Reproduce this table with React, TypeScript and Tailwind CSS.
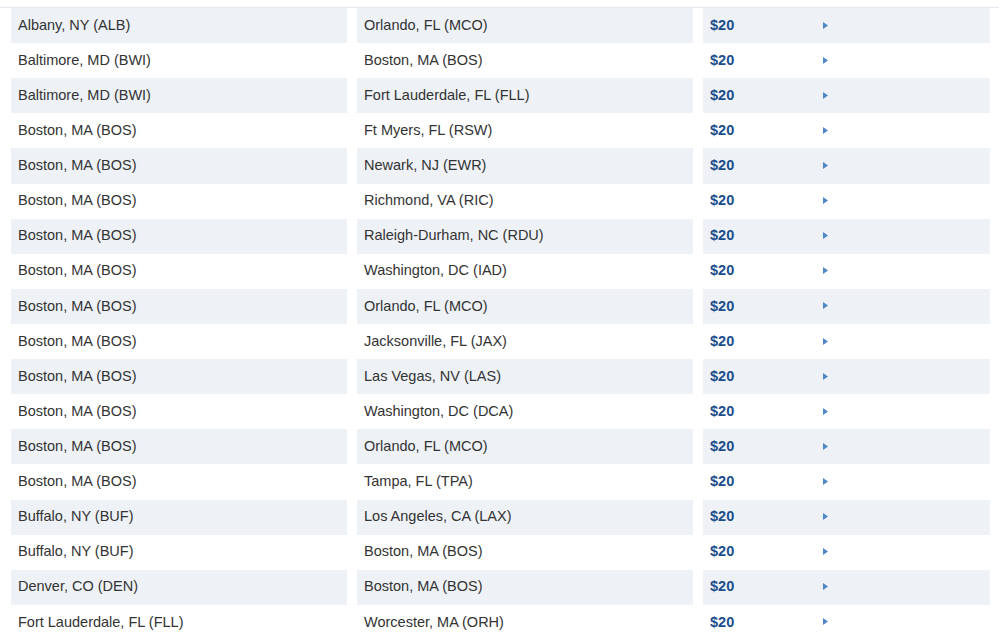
const ROUTES: [string, string][] = [
  ['Albany, NY (ALB)', 'Orlando, FL (MCO)'],
  ['Baltimore, MD (BWI)', 'Boston, MA (BOS)'],
  ['Baltimore, MD (BWI)', 'Fort Lauderdale, FL (FLL)'],
  ['Boston, MA (BOS)', 'Ft Myers, FL (RSW)'],
  ['Boston, MA (BOS)', 'Newark, NJ (EWR)'],
  ['Boston, MA (BOS)', 'Richmond, VA (RIC)'],
  ['Boston, MA (BOS)', 'Raleigh-Durham, NC (RDU)'],
  ['Boston, MA (BOS)', 'Washington, DC (IAD)'],
  ['Boston, MA (BOS)', 'Orlando, FL (MCO)'],
  ['Boston, MA (BOS)', 'Jacksonville, FL (JAX)'],
  ['Boston, MA (BOS)', 'Las Vegas, NV (LAS)'],
  ['Boston, MA (BOS)', 'Washington, DC (DCA)'],
  ['Boston, MA (BOS)', 'Orlando, FL (MCO)'],
  ['Boston, MA (BOS)', 'Tampa, FL (TPA)'],
  ['Buffalo, NY (BUF)', 'Los Angeles, CA (LAX)'],
  ['Buffalo, NY (BUF)', 'Boston, MA (BOS)'],
  ['Denver, CO (DEN)', 'Boston, MA (BOS)'],
  ['Fort Lauderdale, FL (FLL)', 'Worcester, MA (ORH)'],
]

export default function App() {
  return (
    <div className="h-[639px] w-[999px] overflow-hidden bg-white pt-[7px] font-['Liberation_Sans',Arial,sans-serif] text-[14.5px] text-[#333]">
      <div className="border-t border-[#e3e9ef] pl-[11px] pr-[9px]">
        {ROUTES.map(([from, to], i) => {
          const bg = i % 2 === 0 ? 'bg-[#eef2f6]' : 'bg-white'
          return (
            <div key={i} className="flex h-[35.12px] gap-[10px]">
              <div className={`flex w-[336px] items-center pl-[7px] ${bg}`}>{from}</div>
              <div className={`flex w-[336px] items-center pl-[7px] ${bg}`}>{to}</div>
              <div className={`flex flex-1 items-center pl-[7px] ${bg}`}>
                <span className="w-[113px] font-bold text-[#1b4d8c]">$20</span>
                <svg width="5" height="7" viewBox="0 0 5 7" className="mt-[-1px]">
                  <path d="M0 0 L5 3.5 L0 7 Z" fill="#4f88c6" />
                </svg>
              </div>
            </div>
          )
        })}
      </div>
    </div>
  )
}
